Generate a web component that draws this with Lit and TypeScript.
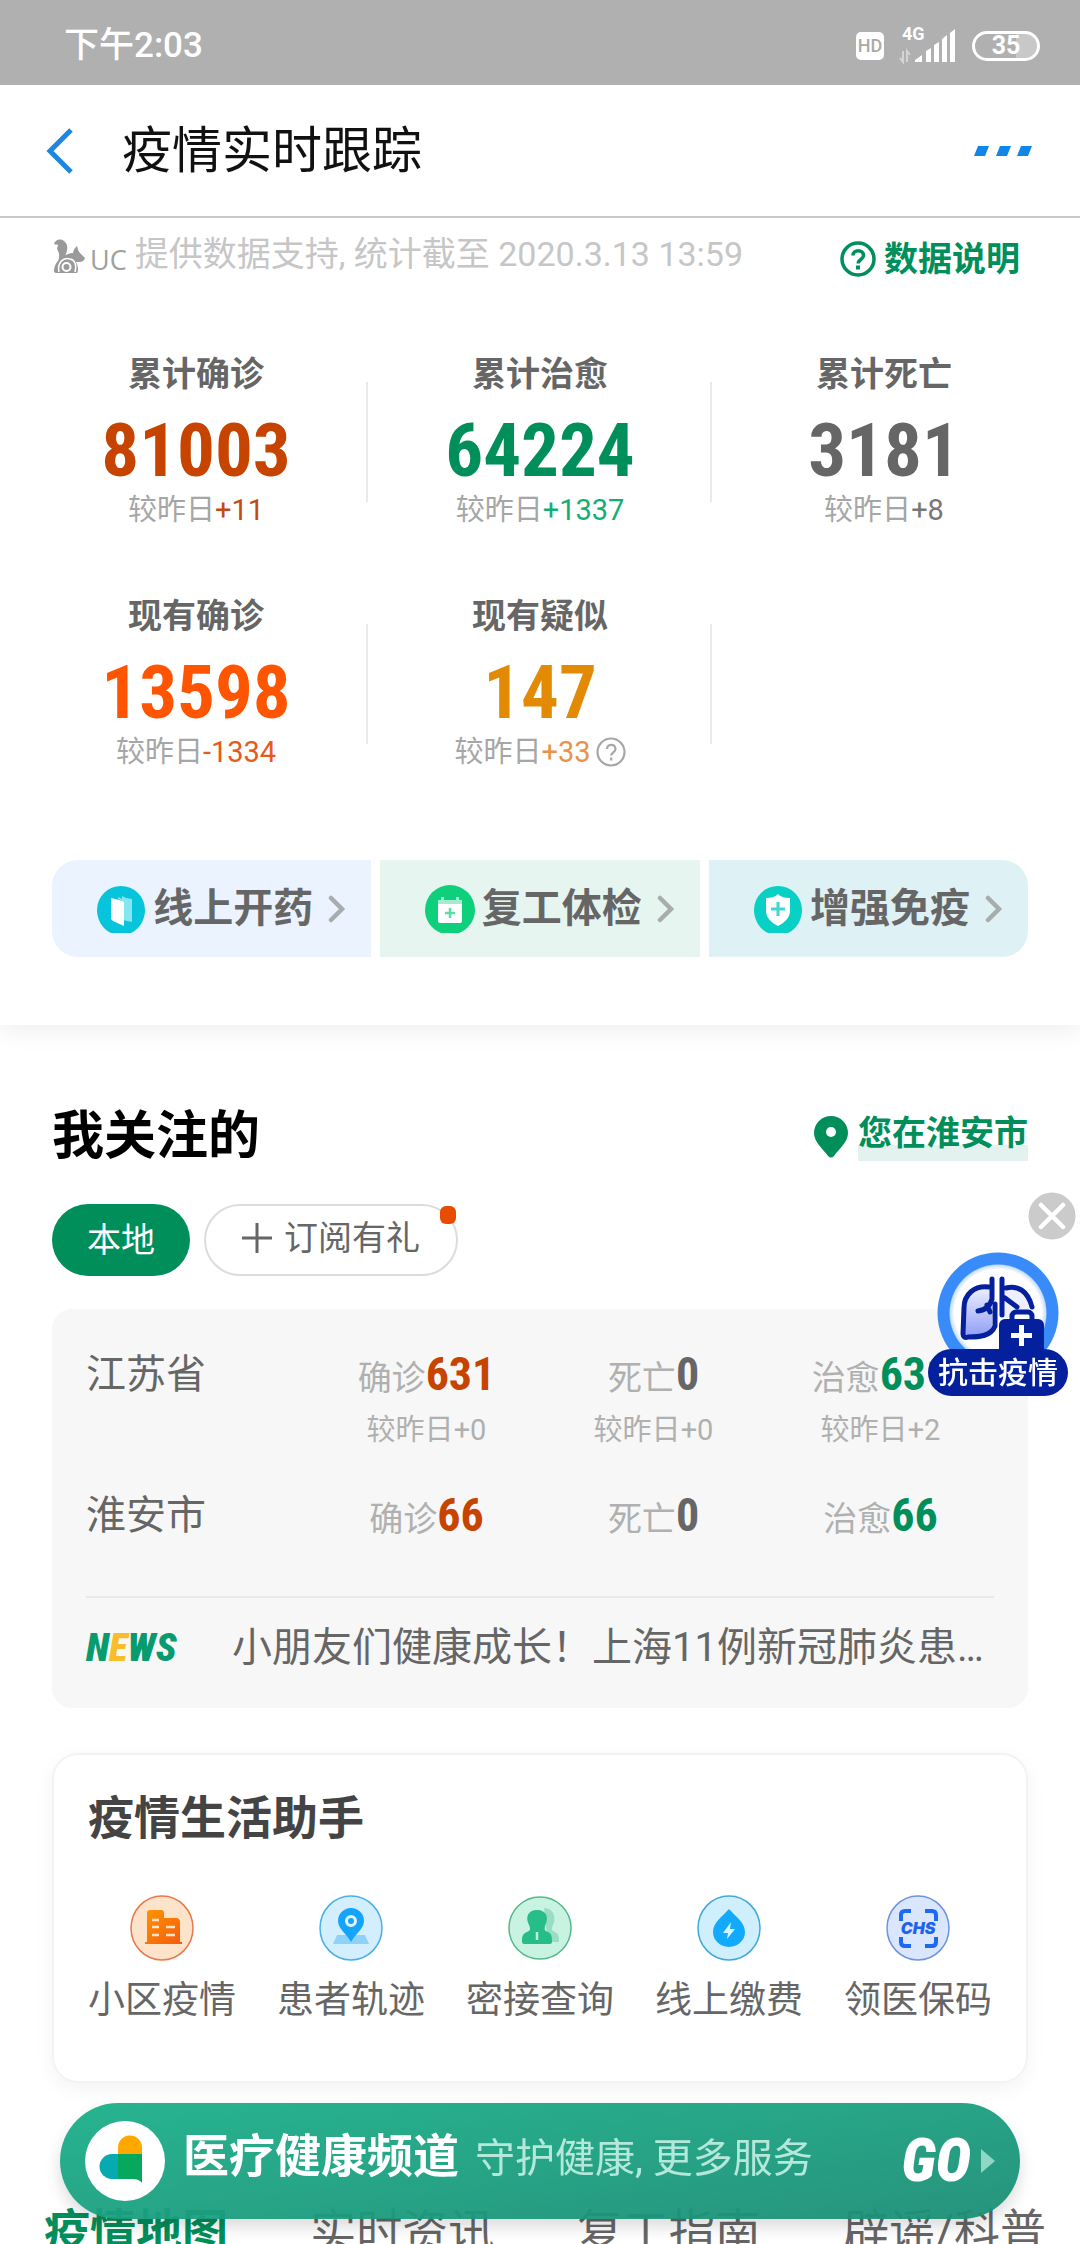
import { LitElement, html, css, svg } from "lit";
import { customElement, property } from "lit/decorators.js";

interface Stat {
  label: string;
  value: string;
  delta: string;
  tone: string;
  help?: boolean;
}

const stats: Stat[] = [
  { label: "累计确诊", value: "81003", delta: "+11", tone: "red" },
  { label: "累计治愈", value: "64224", delta: "+1337", tone: "green" },
  { label: "累计死亡", value: "3181", delta: "+8", tone: "gray" },
  { label: "现有确诊", value: "13598", delta: "-1334", tone: "orange" },
  { label: "现有疑似", value: "147", delta: "+33", tone: "amber", help: true },
];

const regions = [
  {
    name: "江苏省",
    cells: [
      { label: "确诊", value: "631", delta: "+0", tone: "red" },
      { label: "死亡", value: "0", delta: "+0", tone: "gray" },
      { label: "治愈", value: "631", delta: "+2", tone: "green" },
    ],
  },
  {
    name: "淮安市",
    cells: [
      { label: "确诊", value: "66", delta: "", tone: "red" },
      { label: "死亡", value: "0", delta: "", tone: "gray" },
      { label: "治愈", value: "66", delta: "", tone: "green" },
    ],
  },
];

const icons: Record<string, unknown> = {
  back: svg`<svg width="30" height="46" viewBox="0 0 30 46"><path d="M27 2 6 23l21 21" fill="none" stroke="#1c86e0" stroke-width="5"/></svg>`,
  more: svg`<svg width="58" height="10" viewBox="0 0 58 10" fill="#1186ea"><path d="M4 0h11l-4 10H0zM26 0h11l-4 10H22zM47 0h11l-4 10H43z"/></svg>`,
  signal: svg`<svg width="60" height="36" viewBox="0 0 60 36"><g fill="#fff"><path d="M17 34v-2l7-5v7zM28 34V23l5-3v14zM36 34V17l5-3v20zM44 34V11l5-4v27zM52 34V5l5-4v33z"/></g><g stroke="#d4d4d4" stroke-width="2" fill="none"><path d="M5 23v11l-3-4M9 34V23l3 4"/></g></svg>`,
  uc: svg`<svg width="34" height="34" viewBox="0 0 34 34"><path d="M2 5C3 1 8-1 12 2c5 4 3 9 2 13-1 3-5 5-8 9 1-6 2-8 0-12C4 9 6 8 6 6 5 5 3 6 2 5Z" fill="#9a9a9a"/><path d="M21 14c1-4 2-5 4-7 1 3 1 5 3 7l5 5c-1 3-3 4-6 4h-3c2 4 3 8 1 11H4c-1 0-2-1-2-2 0-8 8-17 19-18Z" fill="#9a9a9a"/><path d="M7 33c-2-9 4-15 11-13 5 1 7 6 5 13" fill="none" stroke="#fff" stroke-width="1.500"/><circle cx="14.500" cy="28" r="4" fill="none" stroke="#fff" stroke-width="2"/></svg>`,
  question: svg`<svg width="36" height="36" viewBox="0 0 36 36" fill="none" stroke="currentColor"><circle cx="18" cy="18" r="16" stroke-width="3.500"/><path d="M13 14.500c0-6.500 10.500-6.500 10.500 0 0 4-5.300 4-5.300 8" stroke-width="3.500"/><path d="M18 24.500v4" stroke-width="4"/></svg>`,
  help: svg`<svg width="30" height="30" viewBox="0 0 30 30" fill="none" stroke="#a6a6a6" stroke-width="2.200"><circle cx="15" cy="15" r="13.500"/><path d="M11 12c0-5.500 8.500-5.500 8.500 0 0 3.300-4.300 3.300-4.300 6.500M15.200 20.500v3"/></svg>`,
  chevron: svg`<svg width="18" height="28" viewBox="0 0 18 28"><path d="m3 3 11 11L3 25" fill="none" stroke="#a8acad" stroke-width="4.500" stroke-linecap="round"/></svg>`,
  medicine: svg`<svg width="50" height="50" viewBox="0 0 50 50"><path d="M15 49C6 45 1 35 1 26a24 24 0 0 1 48 0c0 9-5 19-14 23Z" fill="#06c4da"/><path d="m22 13 4 2v-3l4 2 6 1v23l-9-2V17l-5-2Z" fill="#84e6f0"/><path d="m15 14 12 3 1 2v23l-11-5-2-2Z" fill="#fff"/></svg>`,
  checkup: svg`<svg width="50" height="50" viewBox="0 0 50 50"><path d="M16 49C6 45 0 36 0 26a25 25 0 0 1 50 0c0 10-6 19-16 23Z" fill="#0ed07c"/><path d="M13 16h3v-3h3v3h12v-3h3v3h3v4H13Z" fill="#a5eccf"/><path d="M13 20h24v17q0 2-2 2H15q-2 0-2-2Z" fill="#fff"/><path d="M25 24v10M20 29h10" stroke="#5fdba8" stroke-width="2.500"/></svg>`,
  immune: svg`<svg width="50" height="50" viewBox="0 0 50 50"><path d="M15 49C6 45 1 35 1 26a24 24 0 0 1 48 0c0 9-5 19-14 23Z" fill="#08d0c4"/><path d="M25 10c3 3 7 4 12 4v13c0 7-6 12-12 15-6-3-12-8-12-15V14c5 0 9-1 12-4Z" fill="#fff"/><path d="M25 18v14M18 25h14" stroke="#43d6ce" stroke-width="3"/></svg>`,
  pin: svg`<svg width="34" height="42" viewBox="0 0 34 42"><path d="M17 0a17 17 0 0 1 17 17c0 9-9 16-14 23q-3 3-6 0C9 33 0 26 0 17A17 17 0 0 1 17 0Z" fill="#008f5b"/><circle cx="17" cy="16" r="5" fill="#fff"/></svg>`,
  plus: svg`<svg width="30" height="30" viewBox="0 0 30 30"><path d="M15 0v30M0 15h30" stroke="#666" stroke-width="3"/></svg>`,
  close: svg`<svg width="48" height="48" viewBox="0 0 48 48"><circle cx="24" cy="24" r="23.500" fill="#cbcbcb"/><path d="m13 13 22 22M35 13 13 35" stroke="#fff" stroke-width="4.500" stroke-linecap="round"/></svg>`,
  lungs: svg`<svg width="122" height="122" viewBox="0 0 122 122"><defs><linearGradient id="lung" x1="0" y1="0" x2="0" y2="1"><stop offset="0" stop-color="#eef0ff"/><stop offset="1" stop-color="#8f9cf5"/></linearGradient><radialGradient id="ring"><stop offset=".72" stop-color="#fff"/><stop offset=".79" stop-color="#c7deff"/><stop offset=".81" stop-color="#3a8bfa"/></radialGradient></defs><circle cx="61" cy="61" r="60.500" fill="url(#ring)"/><g stroke="#04209c" stroke-width="5" stroke-linecap="round" stroke-linejoin="round"><path d="M54 36C42 32 26 39 27 56l-1 26c0 3 2 4 5 3 12 0 21-2 24-11V52Z" fill="url(#lung)" stroke="none"/><path d="M67 36c12-3 23 3 27 18v12H67Z" fill="#eef0ff" stroke="none"/><path d="M52 35C38 33 27 42 27 56l-1 26c0 3 2 4 5 3 12 0 23-1 27-11V52M69 36c12-3 22 3 26 19" fill="none"/><path d="M55 27v20q-3 11-14 12M50 53l3 7M65 27v36M68 46l12 9" fill="none"/></g><rect x="75" y="60" width="20" height="14" rx="4" fill="#fff" stroke="#04209c" stroke-width="5"/><rect x="62" y="67" width="45" height="38" rx="6" fill="#04209c"/><path d="M84.500 73v21M74 83.500h21" stroke="#fff" stroke-width="5"/></svg>`,
  community: svg`<svg width="64" height="66" viewBox="0 0 64 66"><defs><linearGradient id="bld" x1="0" y1="0" x2="1" y2="1"><stop offset="0" stop-color="#ff9500"/><stop offset="1" stop-color="#f45a10"/></linearGradient></defs><ellipse cx="32" cy="33" rx="31" ry="32" fill="#fee3cb" stroke="#e9784a" stroke-width="1.500"/><path d="M17 18q0-3 3-3h11q3 0 3 3v5h12q4 0 4 4v20h2v2H15v-2h2Z" fill="url(#bld)"/><path d="M22 25h7M22 32h7M36 32h9M22 40h7M36 40h9" stroke="#ffe3c8" stroke-width="2.500"/></svg>`,
  track: svg`<svg width="64" height="66" viewBox="0 0 64 66"><ellipse cx="32" cy="33" rx="31" ry="32" fill="#d3efff" stroke="#4aaee8" stroke-width="1.500"/><path d="M18 40h28l4 9H14Z" fill="#8fd2f8"/><path d="M32 13a13 13 0 0 1 13 13c0 8-9 13-13 21-4-8-13-13-13-21a13 13 0 0 1 13-13Z" fill="#15a4fb"/><circle cx="32" cy="26" r="4.500" fill="#15a4fb" stroke="#e3f5ff" stroke-width="3"/></svg>`,
  contact: svg`<svg width="64" height="66" viewBox="0 0 64 66"><ellipse cx="32" cy="33" rx="31" ry="31" fill="#c8f3e3" stroke="#54b889" stroke-width="1.500"/><path d="M36 13c9 0 13 9 9 17-2 4-1 6 2 7 4 2 4 5 4 10H40Z" fill="#9bddc4"/><path d="M29 15c10 0 12 8 8 16-1 4 0 5 3 6 4 2 4 5 4 10 0 1-1 2-2 2H16c-1 0-2-1-2-2 0-5 0-8 5-10 3-1 4-3 2-7-4-8-1-15 8-15Z" fill="#26bd88"/><path d="M29 37v8" stroke="#b8f0dc" stroke-width="2.500"/></svg>`,
  pay: svg`<svg width="64" height="66" viewBox="0 0 64 66"><ellipse cx="32" cy="33" rx="31" ry="32" fill="#d0effd" stroke="#3fa9da" stroke-width="1.500"/><path d="M32 14c6 7 16 13 16 23a16 15 0 0 1-32 0c0-10 10-16 16-23Z" fill="#12aafc"/><path d="m34 27-8 11h5l-1 6 8-10h-5Z" fill="#d5f3ff"/></svg>`,
  chs: svg`<svg width="64" height="66" viewBox="0 0 64 66"><ellipse cx="32" cy="33" rx="31" ry="32" fill="#d9e6fd" stroke="#6f93e0" stroke-width="1.500"/><path d="M15 26v-6q0-4 4-4h6M39 16h7q4 0 4 4v6M15 42v5q0 4 4 4h6M39 51h7q4 0 4-4v-5" fill="none" stroke="#1d6af2" stroke-width="4"/><text x="32" y="39" text-anchor="middle" font-family="Inter, sans-serif" font-weight="900" font-style="italic" font-size="16" fill="#1d62ec">CHS</text></svg>`,
  health: svg`<svg width="80" height="80" viewBox="0 0 80 80"><circle cx="40" cy="40" r="40" fill="#fff"/><path d="M33 33V27a12 12 0 0 1 24-1v7Z" fill="#ffa800"/><path d="M33 33v25h-6a12.500 12.500 0 0 1 0-25Z" fill="#06aab0"/><path d="M33 33h24v29q-3-4-9-4H33Z" fill="#05a85c"/></svg>`,
  arrow: svg`<svg width="14" height="24" viewBox="0 0 14 24"><path d="m0 0 14 12L0 24Z" fill="#8fd6c4"/></svg>`,
};

const shared = css`
  * { box-sizing: border-box; }
  svg { display: block; flex: none; }
  button {
    font: inherit;
    color: inherit;
    background: none;
    border: 0;
    margin: 0;
    padding: 0;
    cursor: pointer;
  }
  a { color: inherit; text-decoration: none; }
  .red { --tone: #c74300; --soft: #c34a12; }
  .green { --tone: #008f5b; --soft: #14ae74; }
  .gray { --tone: #666; --soft: #777; }
  .orange { --tone: #ff5500; --soft: #e8591a; }
  .amber { --tone: #e38a04; --soft: #e8924a; }
  .figure {
    font-family: "Roboto Condensed", "Liberation Sans Narrow", Roboto, sans-serif;
    font-weight: 700;
    color: var(--tone);
  }
`;

@customElement("status-bar")
class StatusBar extends LitElement {
  static styles = [
    shared,
    css`
      :host {
        display: flex;
        align-items: center;
        justify-content: space-between;
        flex: none;
        height: 85px;
        padding: 6px 40px 0 64px;
        background: #b0b0b0;
        color: #fff;
      }
      .time { font-size: 35px; line-height: 40px; font-weight: 500; }
      .tray { display: flex; align-items: center; gap: 14px; }
      .hd {
        width: 28px;
        line-height: 28px;
        border-radius: 5px;
        background: #fff;
        color: #aaa;
        font-size: 18px;
        font-weight: 500;
        text-align: center;
      }
      .net { position: relative; }
      .gen { position: absolute; left: 4px; top: -4px; font-size: 18px; line-height: 20px; font-weight: 700; }
      .battery {
        width: 68px;
        border: 3px solid #fff;
        border-radius: 16px;
        background: linear-gradient(90deg, transparent 66%, #c8c8c8 66%);
        font-size: 25px;
        line-height: 24px;
        font-weight: 700;
        text-align: center;
      }
    `,
  ];
  render() {
    return html`
      <span class="time">下午2:03</span>
      <div class="tray">
        <span class="hd">HD</span>
        <span class="net"><span class="gen">4G</span>${icons.signal}</span>
        <span class="battery">35</span>
      </div>
    `;
  }
}

@customElement("stat-item")
class StatItem extends LitElement {
  @property({ attribute: false }) stat!: Stat;
  static styles = [
    shared,
    css`
      :host { display: flex; flex-direction: column; align-items: center; }
      .label { font-size: 34px; line-height: 40px; font-weight: 700; color: #666; }
      .figure { font-size: 75px; line-height: 64px; margin: 24px 0 8px; }
      .delta { display: flex; align-items: center; font-size: 29px; line-height: 40px; color: #a6a6a6; }
      .change { color: var(--soft); }
      .help { margin-left: 5px; }
    `,
  ];
  render() {
    const s = this.stat;
    return html`
      <span class="label">${s.label}</span>
      <span class="figure ${s.tone}">${s.value}</span>
      <span class="delta"
        >较昨日<span class="change ${s.tone}">${s.delta}</span>${s.help
          ? html`<button class="help" aria-label="说明">${icons.help}</button>`
          : ""}</span
      >
    `;
  }
}

@customElement("app-root")
class AppRoot extends LitElement {
  static styles = [
    shared,
    css`
      :host {
        display: flex;
        flex-direction: column;
        height: 100vh;
        overflow: hidden;
        background: #fff;
        font-family: Roboto, "Noto Sans CJK SC", sans-serif;
        color: #666;
      }
      .bar {
        display: flex;
        align-items: center;
        height: 133px;
        padding: 0 48px 0 44px;
        border-bottom: 2px solid #c8c8c8;
        flex: none;
      }
      .bar h1 { flex: 1; margin: 0 0 0 48px; font-size: 50px; line-height: 60px; font-weight: 400; color: #111; }
      .page { flex: 1; min-height: 0; overflow-y: auto; scrollbar-width: none; }
      .summary { box-shadow: 0 4px 24px rgba(0, 0, 0, 0.08); }
      .source {
        display: flex;
        align-items: center;
        height: 76px;
        padding: 0 60px 0 52px;
        font-size: 34px;
        line-height: 40px;
        color: #c6c6c6;
      }
      .source p { flex: 1; margin: 0 0 4px 8px; }
      .uc { margin-left: 4px; font: 27px/36px "Open Sans", sans-serif; color: #a0a0a0; padding-top: 8px; }
      .explain { display: flex; align-items: center; gap: 8px; padding-top: 6px; font-weight: 700; color: #008f5b; }
      .stats { display: grid; grid-template-columns: repeat(3, 1fr); row-gap: 66px; padding: 60px 24px 0; }
      .stat { background: linear-gradient(#e9e9e9, #e9e9e9) no-repeat right center / 2px 120px; }
      .stat:nth-child(3) { background: none; }
      .shortcuts { display: grid; grid-template-columns: repeat(3, 1fr); gap: 9px; padding: 88px 52px 68px; }
      .shortcut {
        display: flex;
        align-items: center;
        justify-content: flex-end;
        height: 97px;
        padding-right: 25px;
        font-size: 40px;
        line-height: 48px;
        font-weight: 700;
        gap: 7px;
      }
      .shortcut .go { margin-left: 8px; }
      .shortcut:nth-child(1) { background: #eaf3ff; border-radius: 26px 0 0 26px; }
      .shortcut:nth-child(2) { background: #e6f5f0; }
      .shortcut:nth-child(3) { background: #def1f5; border-radius: 0 26px 26px 0; }
      .follow { padding: 82px 52px 0; }
      .follow-head { display: flex; align-items: center; justify-content: space-between; }
      h2 { margin: 0; font-size: 52px; line-height: 60px; font-weight: 700; color: #000; }
      .place { display: flex; align-items: center; gap: 10px; font-size: 34px; line-height: 60px; font-weight: 700; color: #008f5b; }
      .place-name { line-height: 40px; padding-bottom: 8px; background: linear-gradient(transparent 67%, #e3f2ee 67%); }
      .pills { display: flex; gap: 14px; margin: 37px 0 33px; font-size: 34px; line-height: 40px; }
      .pill { display: flex; align-items: center; gap: 12px; height: 72px; padding: 0 35px; border-radius: 36px; background: #008f5b; color: #fff; }
      .pill.outline { position: relative; padding: 0 36px 4px; border: 2px solid #dcdcdc; background: #fff; color: #666; }
      .dot { position: absolute; right: 0; top: 0; width: 16px; height: 18px; border-radius: 6px; background: #e84c00; }
      .region-card { padding: 0 34px; border-radius: 20px; background: #f7f7f7; }
      table { width: 100%; table-layout: fixed; border-collapse: collapse; }
      th, td { vertical-align: top; line-height: 50px; font-weight: 400; }
      tbody { border-bottom: 2px solid #e9e9e9; }
      th { padding: 41px 0 0; text-align: left; font-size: 40px; }
      td { padding: 44px 0 0; text-align: center; font-size: 34px; color: #b0b0b0; }
      tr:last-child > * { padding-bottom: 52px; }
      td .figure { font-size: 46px; line-height: 40px; }
      .since { display: block; margin-top: 7px; font-size: 29px; line-height: 40px; }
      .news { display: flex; align-items: center; line-height: 100px; padding-bottom: 10px; }
      .news-tag { flex: 0 0 146px; font-family: "Roboto Condensed", Roboto, sans-serif; font-size: 39px; font-weight: 900; font-style: italic; color: #089b6e; }
      .news-tag i { color: #f9bd2c; }
      .news-text { flex: 1; min-width: 0; overflow: hidden; white-space: nowrap; text-overflow: ellipsis; font-size: 40px; }
      .helper {
        margin-top: 45px;
        padding: 33px 34px 56px;
        border: 2px solid #f3f3f3;
        border-radius: 26px;
        box-shadow: 0 6px 20px rgba(0, 0, 0, 0.05);
      }
      .helper h3 { margin: 0 0 47px; font-size: 46px; line-height: 60px; font-weight: 700; color: #444; }
      .tools { display: flex; justify-content: space-between; font-size: 37px; line-height: 48px; }
      .tool { display: flex; flex-direction: column; align-items: center; gap: 16px; }
      .tabs { display: flex; justify-content: space-between; padding: 118px 34px 0 44px; font-size: 46px; line-height: 60px; white-space: nowrap; }
      .tabs .active { font-weight: 700; color: #008f5b; }
      .banner {
        position: fixed;
        left: 60px;
        right: 60px;
        bottom: 25px;
        display: flex;
        align-items: center;
        height: 116px;
        padding: 0 25px;
        border-radius: 58px;
        background: linear-gradient(172deg, #1bb08af2, #1b8e76f2);
        box-shadow: 0 8px 16px rgba(0, 0, 0, 0.14);
        color: #fff;
      }
      .banner strong { margin-left: 18px; padding-bottom: 10px; font-size: 46px; line-height: 60px; }
      .banner-sub { flex: 1; margin-left: 16px; padding-bottom: 4px; font-size: 40px; line-height: 60px; color: #b4e8db; }
      .banner-go { margin-right: 10px; font: italic 900 60px/60px "Roboto Condensed", Roboto, sans-serif; }
      .close { position: fixed; right: 4px; top: 1192px; }
      .float { position: fixed; right: 12px; top: 1252px; display: flex; flex-direction: column; align-items: center; }
      .float-label {
        margin-top: -25px;
        padding: 0 10px;
        border-radius: 24px;
        background: #04209c;
        color: #fff;
        font-size: 30px;
        line-height: 47px;
        font-weight: 500;
        position: relative;
      }
    `,
  ];

  private shortcut(icon: string, label: string) {
    return html`<a class="shortcut" href="#">${icons[icon]}<span>${label}</span><span class="go">${icons.chevron}</span></a>`;
  }

  private tool(icon: string, label: string) {
    return html`<a class="tool" href="#">${icons[icon]}<span>${label}</span></a>`;
  }

  render() {
    return html`
      <status-bar></status-bar>
      <header class="bar">
        <button aria-label="返回">${icons.back}</button>
        <h1>疫情实时跟踪</h1>
        <button aria-label="更多">${icons.more}</button>
      </header>
      <main class="page">
        <section class="summary">
          <div class="source">
            ${icons.uc}<span class="uc">UC</span>
            <p>提供数据支持, 统计截至 2020.3.13 13:59</p>
            <a class="explain" href="#">${icons.question}<span>数据说明</span></a>
          </div>
          <div class="stats">
            ${stats.map((s) => html`<stat-item class="stat" .stat=${s}></stat-item>`)}
          </div>
          <nav class="shortcuts">
            ${this.shortcut("medicine", "线上开药")} ${this.shortcut("checkup", "复工体检")}
            ${this.shortcut("immune", "增强免疫")}
          </nav>
        </section>
        <section class="follow">
          <div class="follow-head">
            <h2>我关注的</h2>
            <a class="place" href="#">${icons.pin}<span class="place-name">您在淮安市</span></a>
          </div>
          <div class="pills">
            <button class="pill">本地</button>
            <button class="pill outline">${icons.plus}<span>订阅有礼</span><span class="dot"></span></button>
          </div>
          <div class="region-card">
            <table>
              <tbody>
                ${regions.map(
                  (r) => html`<tr>
                    <th scope="row">${r.name}</th>
                    ${r.cells.map(
                      (c) => html`<td>
                        ${c.label}<span class="figure ${c.tone}">${c.value}</span>${c.delta
                          ? html`<span class="since">较昨日${c.delta}</span>`
                          : ""}
                      </td>`
                    )}
                  </tr>`
                )}
              </tbody>
            </table>
            <a class="news" href="#">
              <span class="news-tag">N<i>E</i>WS</span>
              <span class="news-text">小朋友们健康成长！上海11例新冠肺炎患者出院</span>
            </a>
          </div>
          <section class="helper">
            <h3>疫情生活助手</h3>
            <div class="tools">
              ${this.tool("community", "小区疫情")} ${this.tool("track", "患者轨迹")}
              ${this.tool("contact", "密接查询")} ${this.tool("pay", "线上缴费")}
              ${this.tool("chs", "领医保码")}
            </div>
          </section>
        </section>
        <nav class="tabs">
          <button class="active">疫情地图</button>
          <button>实时资讯</button>
          <button>复工指南</button>
          <button>辟谣/科普</button>
        </nav>
      </main>
      <button class="close" aria-label="关闭">${icons.close}</button>
      <a class="float" href="#">${icons.lungs}<span class="float-label">抗击疫情</span></a>
      <a class="banner" href="#">
        ${icons.health}<strong>医疗健康频道</strong>
        <span class="banner-sub">守护健康, 更多服务</span>
        <span class="banner-go">GO</span>${icons.arrow}
      </a>
    `;
  }
}
